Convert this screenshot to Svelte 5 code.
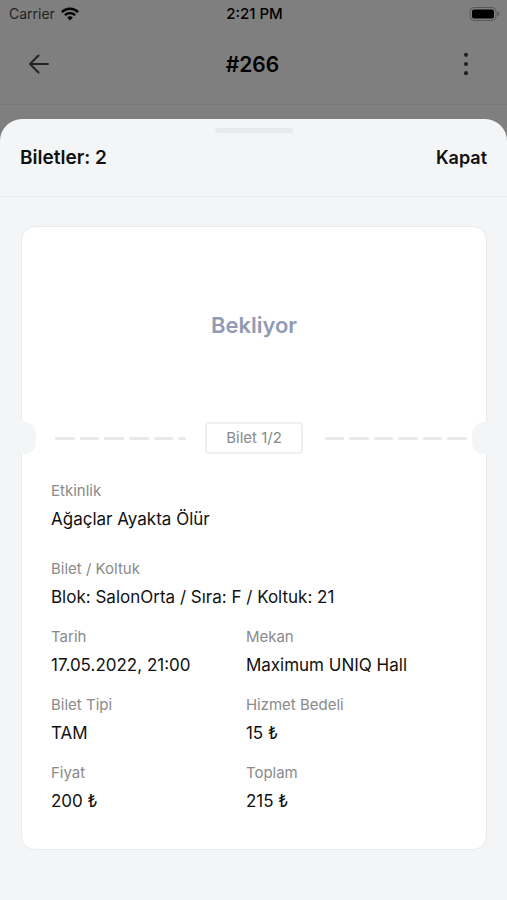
<script lang="ts">
	const fields = [
		{ label: 'Etkinlik', value: 'Ağaçlar Ayakta Ölür', wide: true },
		{ label: 'Bilet / Koltuk', value: 'Blok: SalonOrta / Sıra: F / Koltuk: 21', wide: true },
		{ label: 'Tarih', value: '17.05.2022, 21:00' },
		{ label: 'Mekan', value: 'Maximum UNIQ Hall' },
		{ label: 'Bilet Tipi', value: 'TAM' },
		{ label: 'Hizmet Bedeli', value: '15 ₺' },
		{ label: 'Fiyat', value: '200 ₺' },
		{ label: 'Toplam', value: '215 ₺' }
	];
	const dashes = Array.from({ length: 6 }, (_, index) => index);
</script>

<div class="screen">
	<div class="page">
		<div class="status">
			<span class="carrier">
				Carrier
				<svg width="18" height="14" viewBox="0 0 18 14" fill="none" stroke="#000" stroke-width="2.4" aria-hidden="true">
					<path d="M0.9 5.1a11.5 11.5 0 0 1 16.2 0" />
					<path d="M3.9 8.2a7.2 7.2 0 0 1 10.2 0" />
					<path d="M9 13.4 6.2 10.5a4 4 0 0 1 5.6 0z" fill="#000" stroke="none" />
				</svg>
			</span>
			<span class="time">2:21 PM</span>
			<svg class="battery" width="31" height="14" viewBox="0 0 31 14" aria-hidden="true">
				<rect x="1" y="0.5" width="26" height="13" rx="4" fill="none" stroke="#000" stroke-opacity="0.3" />
				<rect x="3" y="2.5" width="22" height="9" rx="2" />
				<path d="M28.5 4.8q2 .6 2 2.2t-2 2.2z" fill-opacity="0.35" />
			</svg>
		</div>
		<header class="nav">
			<button type="button" aria-label="Geri">
				<svg width="22" height="22" viewBox="0 0 22 22" fill="none" stroke="#222" stroke-width="2" stroke-linecap="round" stroke-linejoin="round">
					<path d="M20 11H2M10.5 2.5 2 11l8.5 8.5" />
				</svg>
			</button>
			<h1>#266</h1>
			<button type="button" class="more" aria-label="Menü">
				<svg width="6" height="24" viewBox="0 0 6 24" fill="#222">
					<circle cx="3" cy="2.8" r="2.1" />
					<circle cx="3" cy="12" r="2.1" />
					<circle cx="3" cy="21.2" r="2.1" />
				</svg>
			</button>
		</header>
	</div>

	<section class="sheet" aria-labelledby="sheet-title">
		<div class="grip"></div>
		<div class="sheet-head">
			<h2 id="sheet-title">Biletler: 2</h2>
			<button type="button">Kapat</button>
		</div>

		<article class="ticket">
			<div class="state">Bekliyor</div>
			<div class="tear">
				<span class="notch"></span>
				<span class="dashes left">
					{#each dashes as dash (dash)}<i></i>{/each}
				</span>
				<span class="count">Bilet 1/2</span>
				<span class="dashes">
					{#each dashes as dash (dash)}<i></i>{/each}
				</span>
				<span class="notch end"></span>
			</div>
			<dl>
				{#each fields as field (field.label)}
					<div class:wide={field.wide}>
						<dt>{field.label}</dt>
						<dd>{field.value}</dd>
					</div>
				{/each}
			</dl>
		</article>
	</section>
</div>

<style>
	:global(body) {
		margin: 0;
		background: #7f7f7f;
	}

	.screen {
		display: flex;
		flex-direction: column;
		min-height: 100vh;
		font-family: Inter, 'Noto Sans', sans-serif;
		color: #111;
	}

	.page {
		padding-bottom: 14px;
		color: #000;
	}

	.status {
		display: grid;
		grid-template-columns: 1fr auto 1fr;
		align-items: center;
		height: 27px;
		padding: 0 7px 0 9px;
		font-size: 14px;
	}

	.carrier {
		display: flex;
		align-items: center;
		gap: 6px;
		color: #222;
	}

	.time {
		font-size: 15px;
		font-weight: 500;
	}

	.battery {
		justify-self: end;
	}

	.nav {
		display: flex;
		align-items: center;
		justify-content: space-between;
		height: 78px;
		padding: 0 30px 3px 28px;
		border-bottom: 1px solid #777;
		box-sizing: border-box;
	}

	h1,
	h2 {
		margin: 0;
		font-weight: 600;
	}

	h1 {
		font-size: 21px;
	}

	button {
		padding: 0;
		border: 0;
		background: none;
		font: inherit;
		color: inherit;
		cursor: pointer;
	}

	.nav button {
		display: flex;
		width: 22px;
	}

	.nav .more {
		justify-content: center;
	}

	.sheet {
		flex: 1;
		padding-bottom: 48px;
		border-radius: 22px 22px 0 0;
		background: #f3f5f7;
	}

	.grip {
		width: 78px;
		height: 5px;
		margin: 9px auto 0;
		border-radius: 2px;
		background: #e8eaeb;
	}

	.sheet-head {
		display: flex;
		align-items: center;
		justify-content: space-between;
		height: 64px;
		padding: 0 20px 14px;
		border-bottom: 1px solid #e8eaec;
		box-sizing: border-box;
		font-size: 18px;
		font-weight: 600;
	}

	h2 {
		font-size: 19px;
	}

	.ticket {
		margin: 29px 20px 0 21px;
		border: 1px solid #e9ebed;
		border-radius: 14px;
		background: #fff;
	}

	.state {
		display: flex;
		align-items: center;
		justify-content: center;
		height: 195px;
		font-size: 22px;
		font-weight: 600;
		color: #929bb5;
	}

	.tear {
		display: grid;
		grid-template-columns: 15px 1fr auto 1fr 15px;
		align-items: center;
		margin: 0 -1px;
	}

	.notch {
		height: 32px;
		border-radius: 0 12px 12px 0;
		background: #f3f5f7;
	}

	.notch.end {
		border-radius: 12px 0 0 12px;
	}

	.dashes {
		display: flex;
		gap: 5px;
		margin: 0 5px 0 22px;
	}

	.dashes.left {
		margin: 0 19px;
	}

	.dashes i {
		flex: 1;
		height: 3px;
		border-radius: 1px;
		background: #e9e9e9;
	}

	.dashes.left i:last-child {
		flex: 0.4;
	}

	.count {
		padding: 0 19px;
		border: 2px solid #f0f0f1;
		border-radius: 4px;
		font-size: 15px;
		line-height: 28px;
		color: #8a8a8a;
	}

	dl {
		display: grid;
		grid-template-columns: 12fr 13fr;
		row-gap: 18px;
		margin: 0;
		padding: 27px 29px 36px;
	}

	dl .wide {
		grid-column: 1 / -1;
	}

	dl .wide:first-child {
		margin-bottom: 10px;
	}

	dt {
		font-size: 15px;
		line-height: 20px;
		color: #8a8a8a;
	}

	dd {
		margin: 6px 0 0;
		font-size: 17px;
		line-height: 24px;
	}
</style>
